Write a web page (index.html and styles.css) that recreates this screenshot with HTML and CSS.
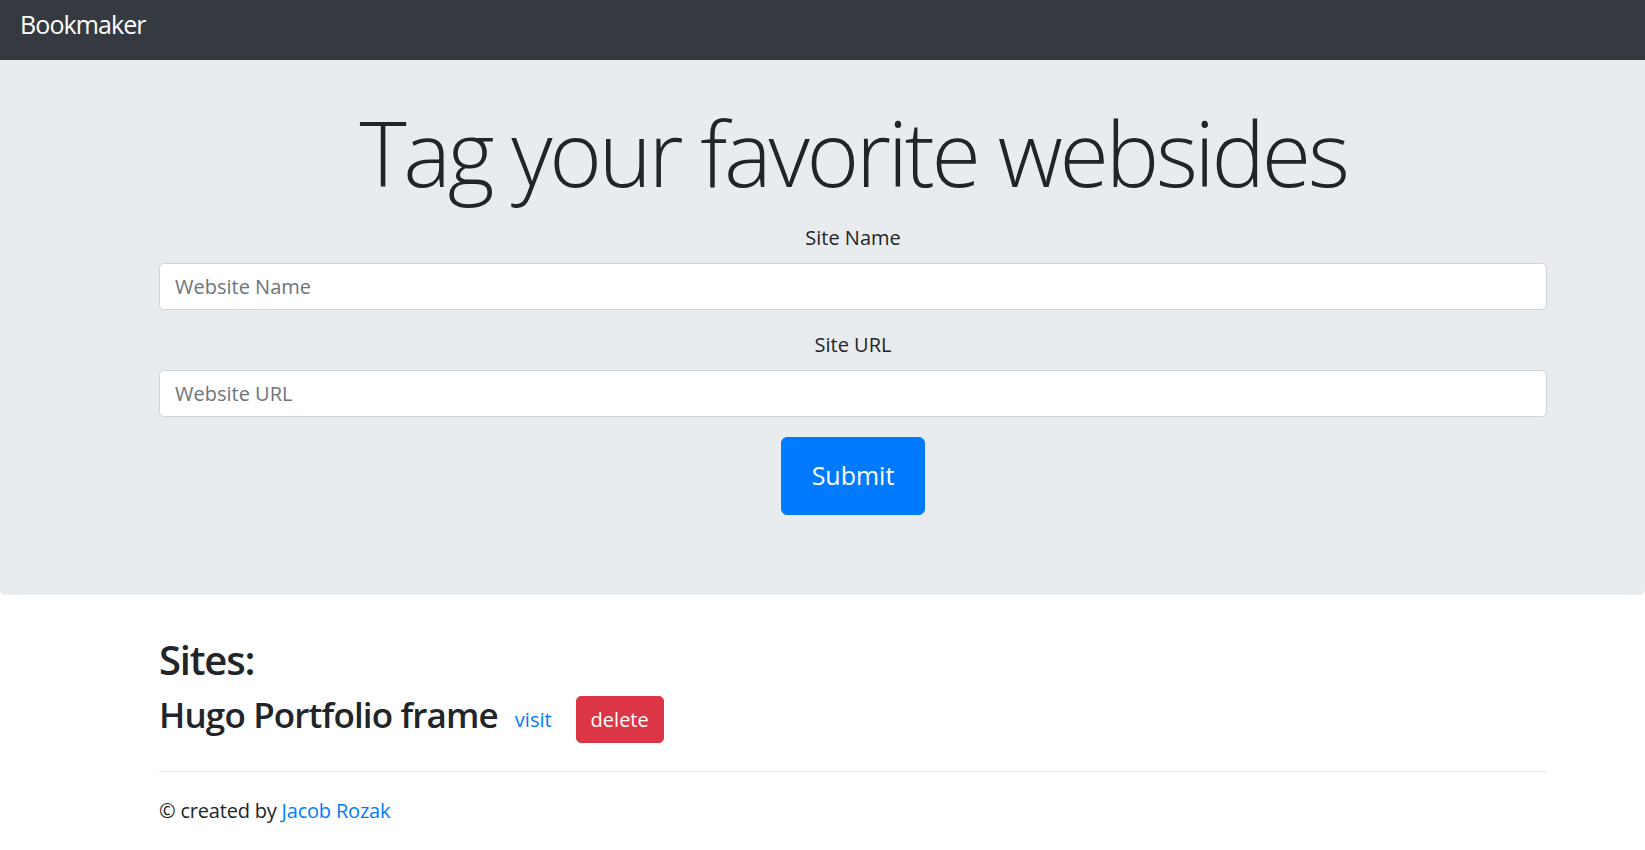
FILE: index.html
```html
<!DOCTYPE html>
<html lang="en">
<head>
<meta charset="utf-8">
<title>Bookmaker</title>
<link rel="stylesheet" href="styles.css">
</head>
<body>
<nav class="navbar">
  <a class="brand" href="#">Bookmaker</a>
</nav>
<header class="jumbotron">
  <div class="container">
    <h1 class="display">Tag your favorite websides</h1>
    <form class="site-form">
      <div class="form-group">
        <label for="siteName">Site Name</label>
        <input id="siteName" class="form-control" type="text" placeholder="Website Name">
      </div>
      <div class="form-group">
        <label for="siteUrl">Site URL</label>
        <input id="siteUrl" class="form-control" type="text" placeholder="Website URL">
      </div>
      <button type="button" class="btn-submit">Submit</button>
    </form>
  </div>
</header>
<main class="container">
  <h2 class="sites-title">Sites:</h2>
  <div class="site-row">
    <h3 class="site-name">Hugo Portfolio frame</h3>
    <a class="visit" href="#">visit</a>
    <button type="button" class="btn-delete">delete</button>
  </div>
  <hr class="divider">
  <p class="footer">© created by <a href="#">Jacob Rozak</a></p>
</main>
</body>
</html>
```

FILE: styles.css
```css
* { box-sizing: border-box; }

body {
  margin: 0;
  font-family: "Open Sans", "Noto Sans", sans-serif;
  font-size: 20px;
  line-height: 1.5;
  color: #212529;
  background: #fff;
}

a { color: #007bff; text-decoration: none; }

.navbar {
  height: 60px;
  background: #343a40;
  padding: 6px 20px 0;
}

.brand {
  color: #fff;
  font-size: 25px;
  line-height: 37.5px;
  letter-spacing: -0.9px;
}

.container {
  width: 1388px;
  margin-left: 159px;
}

.jumbotron {
  background: #e9ecef;
  padding: 38px 0 80px;
  border-radius: 0 0 5px 5px;
  margin-bottom: 41px;
}

.display {
  margin: 0 0 17px;
  font-size: 90px;
  font-weight: 300;
  line-height: 1.2;
  letter-spacing: -3.3px;
  text-align: center;
}

.site-form { text-align: center; }

.form-group { margin-bottom: 20px; }

.form-group label {
  display: block;
  margin-bottom: 10px;
}

.form-control {
  display: block;
  width: 100%;
  height: 47px;
  padding: 0 15px;
  font-family: inherit;
  font-size: 20px;
  color: #495057;
  background: #fff;
  border: 1px solid #ced4da;
  border-radius: 5px;
}

.form-control::placeholder { color: #6c757d; }

.btn-submit {
  font-family: inherit;
  font-size: 25px;
  line-height: 37.5px;
  padding: 19px 30px;
  color: #fff;
  background: #007bff;
  border: 1px solid #007bff;
  border-radius: 6px;
}

.sites-title {
  margin: 0 0 10px;
  font-size: 40px;
  font-weight: 600;
  line-height: 1.2;
  letter-spacing: -1.2px;
}

.site-row {
  display: flex;
  align-items: center;
  margin-bottom: 25px;
}

.site-name {
  margin: 0 0 10px;
  font-size: 35px;
  font-weight: 600;
  line-height: 1.2;
  letter-spacing: -0.85px;
}

.visit { margin-left: 17px; }

.btn-delete {
  margin-left: 24px;
  font-family: inherit;
  font-size: 20px;
  line-height: 30px;
  padding: 7.5px 14px;
  color: #fff;
  background: #dc3545;
  border: 1px solid #dc3545;
  border-radius: 5px;
}

.divider {
  margin: 0 0 24px;
  border: 0;
  border-top: 1px solid rgba(0, 0, 0, 0.1);
}

.footer {
  margin: 0;
  letter-spacing: -0.2px;
}
```
